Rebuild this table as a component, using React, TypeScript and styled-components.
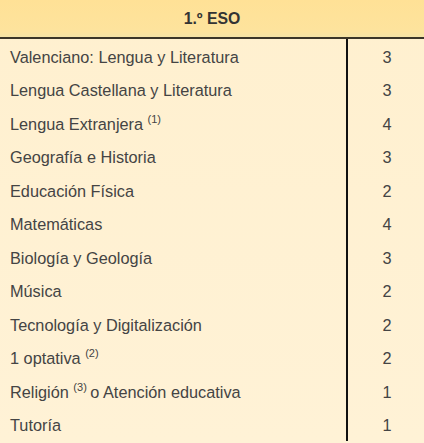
import React from 'react';
import styled, { createGlobalStyle } from 'styled-components';

const Global = createGlobalStyle`
  html, body { margin: 0; padding: 0; background: #fff1d2; }
  body { font-family: "Liberation Sans", Arial, sans-serif; }
`;

const Table = styled.div`
  width: 424px;
  height: 443px;
  background: linear-gradient(#fff0cf, #fff2d6);
  color: #444;
  font-size: 16.3px;
  overflow: hidden;
`;

const Header = styled.div`
  height: 39px;
  display: flex;
  align-items: center;
  justify-content: center;
  background: linear-gradient(#ffe196, #fde39d 85%, #f4e3a6);
  border-bottom: 2px solid #3b3528;
  font-weight: bold;
  font-size: 15.8px;
  color: #333;
  box-sizing: border-box;
  padding-top: 1px;
`;

const Body = styled.div`
  display: grid;
  grid-template-columns: 348px 1fr;
  grid-auto-rows: 33.5px;
`;

const Subject = styled.div`
  display: flex;
  align-items: center;
  padding: 3px 0 0 10px;
  border-right: 2px solid #111;
`;

const Label = styled.span`
  white-space: nowrap;
`;

const Hours = styled.div`
  display: flex;
  align-items: center;
  justify-content: center;
  padding: 3px 0 0 2px;
`;

const Note = styled.sup`
  font-size: 11px;
  vertical-align: 7px;
  line-height: 0;
  margin: 0 -1px 0 0;
`;

const rows: [React.ReactNode, number][] = [
  ['Valenciano: Lengua y Literatura', 3],
  ['Lengua Castellana y Literatura', 3],
  [<>Lengua Extranjera <Note>(1)</Note></>, 4],
  ['Geografía e Historia', 3],
  ['Educación Física', 2],
  ['Matemáticas', 4],
  ['Biología y Geología', 3],
  ['Música', 2],
  ['Tecnología y Digitalización', 2],
  [<>1 optativa <Note>(2)</Note></>, 2],
  [<>Religión <Note>(3)</Note> o Atención educativa</>, 1],
  ['Tutoría', 1],
];

export default function App() {
  return (
    <>
      <Global />
      <Table>
        <Header>1.º ESO</Header>
        <Body>
          {rows.map(([name, h], i) => (
            <React.Fragment key={i}>
              <Subject><Label>{name}</Label></Subject>
              <Hours>{h}</Hours>
            </React.Fragment>
          ))}
        </Body>
      </Table>
    </>
  );
}
